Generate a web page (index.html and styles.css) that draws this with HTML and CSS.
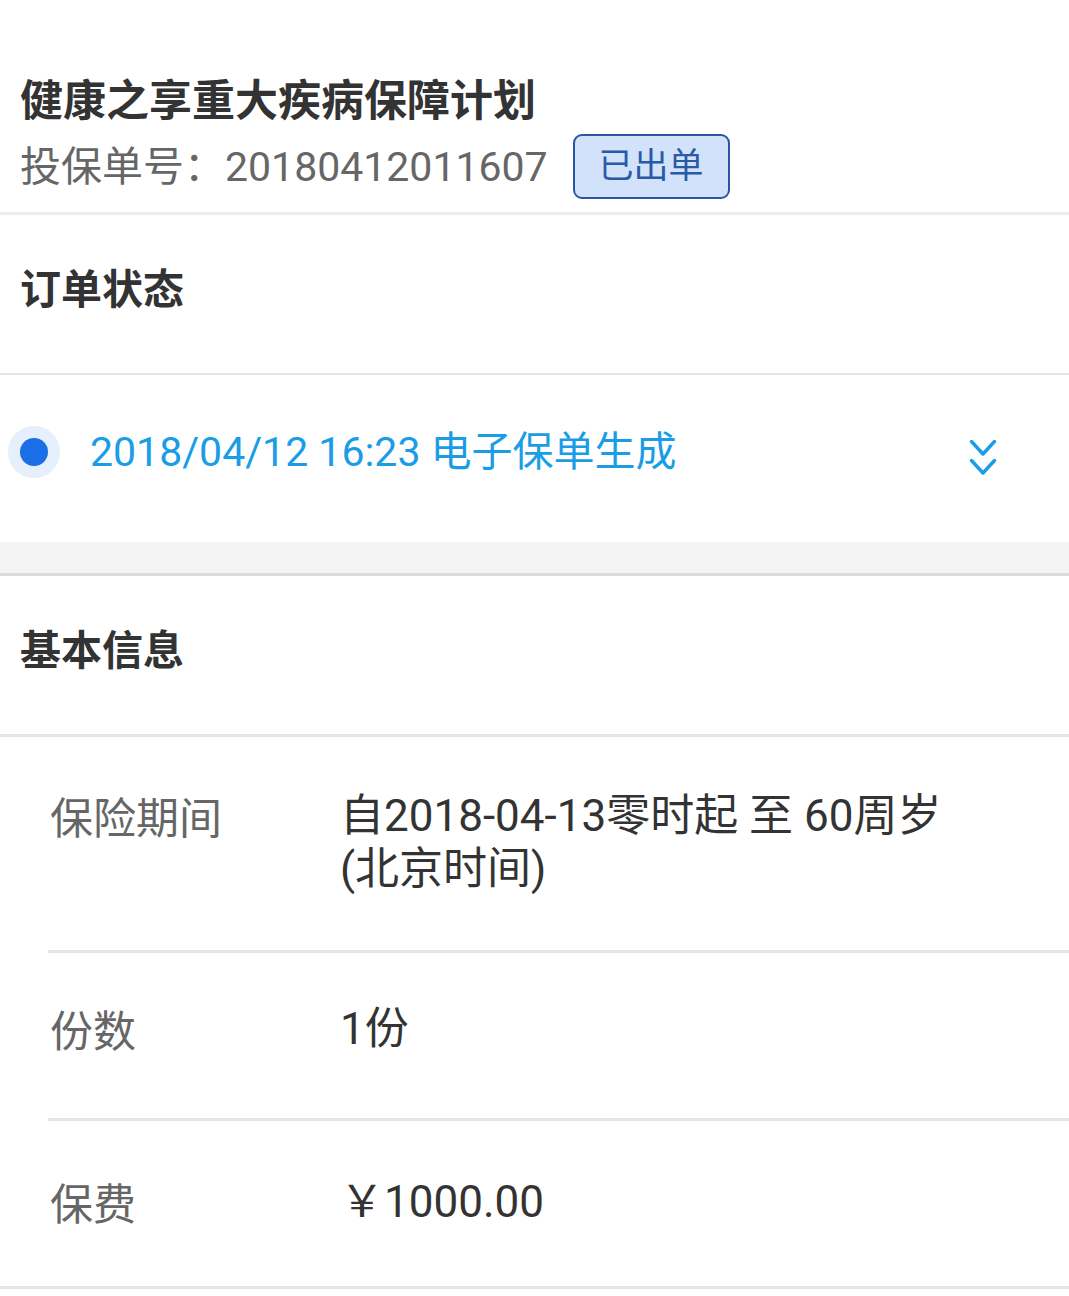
FILE: index.html
```html
<!DOCTYPE html>
<html lang="zh-CN">
<head>
<meta charset="utf-8">
<title>保单详情</title>
<link rel="stylesheet" href="styles.css">
</head>
<body>
<div class="page">
  <header class="head">
    <h1 class="title">健康之享重大疾病保障计划</h1>
    <div class="policy">
      <span class="policy-no">投保单号：20180412011607</span>
      <span class="badge">已出单</span>
    </div>
  </header>

  <section class="block">
    <div class="block-title">订单状态</div>
    <div class="timeline">
      <span class="dot-wrap"><span class="dot"></span></span>
      <span class="tl-text">2018/04/12 16:23 电子保单生成</span>
      <svg class="chevron" width="30" height="40" viewBox="0 0 30 40" aria-hidden="true">
        <path d="M3.5 3.5 L15 16 L26.5 3.5" fill="none" stroke="#1a9de6" stroke-width="3.4" stroke-linecap="round" stroke-linejoin="round"/>
        <path d="M3.5 22.5 L15 35 L26.5 22.5" fill="none" stroke="#1a9de6" stroke-width="3.4" stroke-linecap="round" stroke-linejoin="round"/>
      </svg>
    </div>
  </section>

  <div class="gap"></div>

  <section class="block block-info">
    <div class="block-title block-title-2">基本信息</div>
    <div class="rows">
      <div class="row row-1">
        <div class="label">保险期间</div>
        <div class="value">自2018-04-13零时起 至 60周岁(北京时间)</div>
      </div>
      <div class="row row-2">
        <div class="label">份数</div>
        <div class="value">1份</div>
      </div>
      <div class="row row-3">
        <div class="label">保费</div>
        <div class="value">￥1000.00</div>
      </div>
    </div>
  </section>
</div>
</body>
</html>
```

FILE: styles.css
```css
* { box-sizing: border-box; }

html, body {
  margin: 0;
  padding: 0;
  background: #ffffff;
}

body {
  font-family: "Roboto", "Noto Sans CJK SC", sans-serif;
  color: #333333;
}

.page {
  width: 1069px;
}

.head {
  padding: 75px 20px 13px 20px;
  border-bottom: 3px solid #ececec;
}

.title {
  margin: 0;
  font-size: 43px;
  line-height: 52px;
  font-weight: 700;
  color: #333333;
}

.policy {
  margin-top: 7px;
  display: flex;
  align-items: center;
}

.policy-no {
  font-size: 41px;
  line-height: 52px;
  color: #666666;
}

.badge {
  margin-left: 25px;
  height: 65px;
  padding: 0 24px;
  display: flex;
  align-items: center;
  border: 2px solid #2657a6;
  border-radius: 9px;
  background: #d2e2fb;
  color: #2a5aa5;
  font-size: 35px;
  line-height: 61px;
}

.block-title {
  height: 160px;
  padding: 49px 20px 0;
  font-size: 41px;
  line-height: 52px;
  font-weight: 700;
  color: #333333;
  border-bottom: 2px solid #e6e6e6;
}

.block-title-2 {
  height: 161px;
  padding-top: 49px;
  border-bottom: 3px solid #e5e5e5;
}

.timeline {
  height: 167px;
  display: flex;
  align-items: center;
  padding: 0 71px 13px 8px;
}

.dot-wrap {
  width: 52px;
  height: 52px;
  border-radius: 50%;
  background: #e6f0fc;
  display: flex;
  align-items: center;
  justify-content: center;
  flex: none;
}

.dot {
  width: 28px;
  height: 28px;
  border-radius: 50%;
  background: #1a6fe6;
}

.tl-text {
  margin-left: 30px;
  font-size: 41px;
  line-height: 52px;
  color: #1a9de6;
  flex: 1;
}

.chevron {
  flex: none;
  margin-top: 12px;
}

.gap {
  height: 34px;
  background: #f4f4f4;
  border-bottom: 3px solid #dcdcdc;
}

.block-info {
  border-bottom: 3px solid #e5e5e5;
}

.rows {
  margin-left: 48px;
}

.row {
  display: flex;
  align-items: flex-start;
  padding-left: 2px;
  padding-right: 100px;
}

.row + .row {
  border-top: 3px solid #e5e5e5;
}

.row-1 { height: 213px; padding-top: 53px; }
.row-2 { height: 168px; padding-top: 50px; }
.row-3 { height: 168px; padding-top: 55px; }

.label {
  width: 290px;
  flex: none;
  padding-top: 3px;
  font-size: 43px;
  line-height: 53px;
  color: #666666;
}

.value {
  flex: 1;
  font-size: 44px;
  line-height: 53px;
  color: #333333;
}
```
